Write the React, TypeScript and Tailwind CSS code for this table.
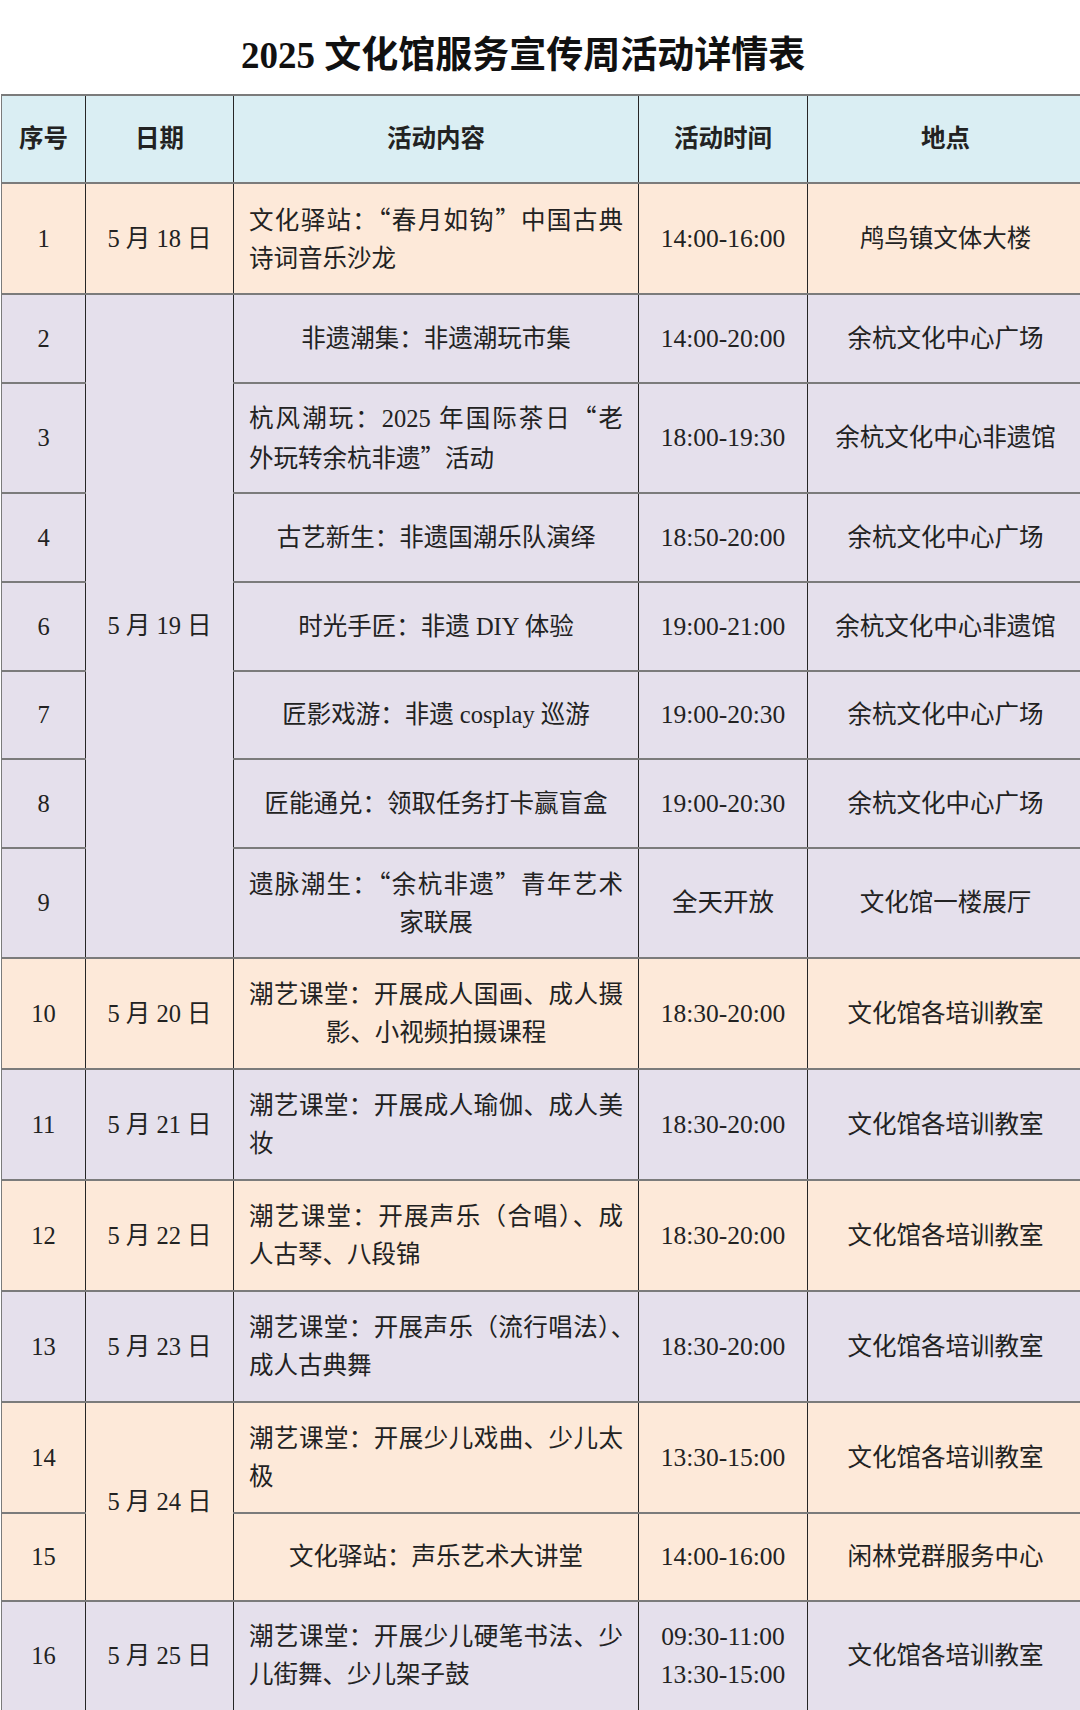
import React from "react";

const Q = ({ c }: { c: string }) => (
  <span className="font-['Noto_Sans_CJK_SC',sans-serif]">{c}</span>
);

type Row = {
  no: string;
  date?: string;
  dateSpan?: number;
  lines: React.ReactNode[];
  center?: boolean;
  time: string[];
  place: string;
  bg: string;
  h: string;
};

const O = "bg-[#fde9d9]";
const P = "bg-[#e5e0ec]";

const rows: Row[] = [
  {
    no: "1",
    date: "5 月 18 日",
    lines: [
      <>文化驿站：<Q c="“" />春月如钩<Q c="”" />中国古典</>,
      "诗词音乐沙龙",
    ],
    time: ["14:00-16:00"],
    place: "鸬鸟镇文体大楼",
    bg: O,
    h: "h-[111px]",
  },
  {
    no: "2",
    date: "5 月 19 日",
    dateSpan: 7,
    lines: ["非遗潮集：非遗潮玩市集"],
    time: ["14:00-20:00"],
    place: "余杭文化中心广场",
    bg: P,
    h: "h-[89px]",
  },
  {
    no: "3",
    lines: [
      <>杭风潮玩：2025 年国际茶日<Q c="“" />老</>,
      <>外玩转余杭非遗<Q c="”" />活动</>,
    ],
    time: ["18:00-19:30"],
    place: "余杭文化中心非遗馆",
    bg: P,
    h: "h-[110px]",
  },
  {
    no: "4",
    lines: ["古艺新生：非遗国潮乐队演绎"],
    time: ["18:50-20:00"],
    place: "余杭文化中心广场",
    bg: P,
    h: "h-[89px]",
  },
  {
    no: "6",
    lines: ["时光手匠：非遗 DIY 体验"],
    time: ["19:00-21:00"],
    place: "余杭文化中心非遗馆",
    bg: P,
    h: "h-[89px]",
  },
  {
    no: "7",
    lines: ["匠影戏游：非遗 cosplay 巡游"],
    time: ["19:00-20:30"],
    place: "余杭文化中心广场",
    bg: P,
    h: "h-[88px]",
  },
  {
    no: "8",
    lines: ["匠能通兑：领取任务打卡赢盲盒"],
    time: ["19:00-20:30"],
    place: "余杭文化中心广场",
    bg: P,
    h: "h-[89px]",
  },
  {
    no: "9",
    lines: [
      <>遗脉潮生：<Q c="“" />余杭非遗<Q c="”" />青年艺术</>,
      "家联展",
    ],
    center: true,
    time: ["全天开放"],
    place: "文化馆一楼展厅",
    bg: P,
    h: "h-[110px]",
  },
  {
    no: "10",
    date: "5 月 20 日",
    lines: ["潮艺课堂：开展成人国画、成人摄", "影、小视频拍摄课程"],
    center: true,
    time: ["18:30-20:00"],
    place: "文化馆各培训教室",
    bg: O,
    h: "h-[111px]",
  },
  {
    no: "11",
    date: "5 月 21 日",
    lines: ["潮艺课堂：开展成人瑜伽、成人美", "妆"],
    time: ["18:30-20:00"],
    place: "文化馆各培训教室",
    bg: P,
    h: "h-[111px]",
  },
  {
    no: "12",
    date: "5 月 22 日",
    lines: ["潮艺课堂：开展声乐（合唱）、成", "人古琴、八段锦"],
    time: ["18:30-20:00"],
    place: "文化馆各培训教室",
    bg: O,
    h: "h-[111px]",
  },
  {
    no: "13",
    date: "5 月 23 日",
    lines: [
      <>
        潮艺课堂：开展声乐（流行唱法
        <span className="[font-feature-settings:'halt']">）、</span>
      </>,
      "成人古典舞",
    ],
    time: ["18:30-20:00"],
    place: "文化馆各培训教室",
    bg: P,
    h: "h-[111px]",
  },
  {
    no: "14",
    date: "5 月 24 日",
    dateSpan: 2,
    lines: ["潮艺课堂：开展少儿戏曲、少儿太", "极"],
    time: ["13:30-15:00"],
    place: "文化馆各培训教室",
    bg: O,
    h: "h-[111px]",
  },
  {
    no: "15",
    lines: ["文化驿站：声乐艺术大讲堂"],
    time: ["14:00-16:00"],
    place: "闲林党群服务中心",
    bg: O,
    h: "h-[88px]",
  },
  {
    no: "16",
    date: "5 月 25 日",
    lines: ["潮艺课堂：开展少儿硬笔书法、少", "儿街舞、少儿架子鼓"],
    time: ["09:30-11:00", "13:30-15:00"],
    place: "文化馆各培训教室",
    bg: P,
    h: "h-[110px]",
  },
];

const cell =
  "border-y-2 border-y-[#7b7b7b] border-x-[1.5px] border-x-[#262626] align-middle text-center p-0";

export default function App() {
  return (
    <div
      lang="zh-CN"
      className="w-[1080px] h-[1710px] overflow-hidden bg-white text-[#222] font-['Liberation_Serif','Noto_Sans_CJK_SC',serif]"
    >
      <div className="h-[94px] pt-[16px] pl-[241px] flex items-center">
        <h1 className="text-[37px] font-bold leading-none text-[#111] whitespace-nowrap">
          2025 文化馆服务宣传周活动详情表
        </h1>
      </div>
      <div className="pl-[1px]">
        <table className="border-collapse table-fixed w-[1082px] text-[24.5px] leading-[38px]">
          <colgroup>
            <col className="w-[84px]" />
            <col className="w-[148px]" />
            <col className="w-[405px]" />
            <col className="w-[169px]" />
            <col className="w-[276px]" />
          </colgroup>
          <thead>
            <tr className="h-[88px] bg-[#daeef3] font-bold">
              <th className={cell + " border-l-[#7b7b7b]"}>序号</th>
              <th className={cell}>日期</th>
              <th className={cell}>活动内容</th>
              <th className={cell}>活动时间</th>
              <th className={cell}>地点</th>
            </tr>
          </thead>
          <tbody>
            {rows.map((r) => (
              <tr key={r.no} className={r.h + " " + r.bg}>
                <td className={cell + " border-l-[#7b7b7b]"}>{r.no}</td>
                {r.date && (
                  <td className={cell} rowSpan={r.dateSpan ?? 1}>
                    {r.date}
                  </td>
                )}
                <td className={cell + " px-[15px]"}>
                  {r.lines.length === 1 ? (
                    <div className="text-center whitespace-nowrap">{r.lines[0]}</div>
                  ) : (
                    <>
                      <div className="text-justify [text-align-last:justify] whitespace-nowrap">
                        {r.lines[0]}
                      </div>
                      <div className={r.center ? "text-center" : "text-left"}>
                        {r.lines[1]}
                      </div>
                    </>
                  )}
                </td>
                <td className={cell + " text-[25.5px]"}>
                  {r.time.map((t) => (
                    <div key={t}>{t}</div>
                  ))}
                </td>
                <td className={cell}>{r.place}</td>
              </tr>
            ))}
          </tbody>
        </table>
      </div>
    </div>
  );
}
